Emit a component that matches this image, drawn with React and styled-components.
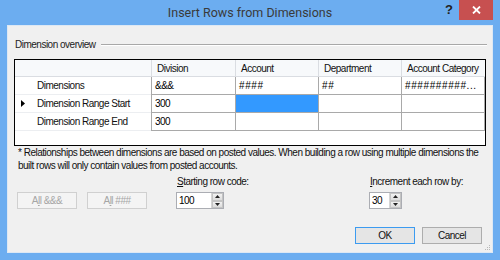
import styled, { createGlobalStyle } from "styled-components"

const Global = createGlobalStyle`
  html, body { margin: 0; padding: 0; background: #6cadf0; }
  body { font-family: "Liberation Sans", Arial, sans-serif; }
`

const Window = styled.div`
  width: 500px;
  height: 260px;
  background: #6cadf0;
  display: flex;
  flex-direction: column;
  overflow: hidden;
`

const TitleBar = styled.div`
  height: 25px;
  position: relative;
  display: flex;
  justify-content: center;
  align-items: center;
  font-family: Roboto, "Liberation Sans", sans-serif;
  font-size: 12.5px;
  color: #3a3a3a;
  padding-bottom: 1px;
  box-sizing: border-box;
`

const Help = styled.span`
  position: absolute;
  left: 445px;
  top: 2px;
  font-family: "Liberation Sans", sans-serif;
  font-weight: 700;
  font-size: 13px;
  color: #222;
`

const Close = styled.div`
  position: absolute;
  left: 459px;
  top: 0;
  width: 34px;
  height: 20px;
  background: #c75050;
  color: #fff;
  display: flex;
  align-items: center;
  justify-content: center;
  svg { display: block; }
`

const Client = styled.div`
  margin: 0 7px;
  height: 228px;
  background: #f0f0f0;
  border: 1px solid #dde8f4;
  box-sizing: border-box;
  padding: 13px 6px 0 6px;
  display: flex;
  flex-direction: column;
  font-size: 10px;
  letter-spacing: -0.5px;
  color: #000;
  position: relative;
`

const GroupHead = styled.div`
  display: flex;
  align-items: center;
  gap: 6px;
  height: 12px;
  line-height: 12px;
  padding-left: 1px;
  color: #222;
`

const GroupLine = styled.div`
  flex: 1;
  height: 1px;
  background: #a8a8a8;
  border-bottom: 1px solid #fff;
  margin-right: -1px;
`

const Grid = styled.div`
  margin-top: 8px;
  width: 472px;
  height: 87px;
  box-sizing: border-box;
  border: 1px solid #000;
  background: #fff;
  display: grid;
  grid-template-columns: 136px 84px 83px 83px 84px;
  grid-template-rows: 17px 18px 18px 18px;
  align-content: start;
`

const HeadCell = styled.div`
  background: #f7f9fb;
  border-bottom: 1px solid #dadde2;
  border-left: ${p => (p.$first ? "none" : "1px solid #dadde2")};
  padding-left: ${p => (p.$first ? 0 : 5)}px;
  display: flex;
  align-items: center;
  white-space: nowrap;
  overflow: hidden;
  color: #111;
`

const RowHead = styled.div`
  border-bottom: 1px solid #eceef1;
  display: flex;
  align-items: center;
  padding-left: 6px;
  white-space: nowrap;
  color: #111;
`

const Marker = styled.span`
  width: 16px;
  display: flex;
  align-items: center;
  svg { display: block; }
`

const Cell = styled.div`
  border-left: 1px solid #a9a9a9;
  border-bottom: 1px solid #a9a9a9;
  border-right: ${p => (p.$last ? "1px solid #a9a9a9" : "none")};
  background: ${p => (p.$selected ? "#3399ff" : "#fff")};
  padding-left: 3px;
  display: flex;
  align-items: center;
  white-space: nowrap;
  overflow: hidden;
  letter-spacing: ${p => (p.$wide ? "0.6px" : "inherit")};
`

const Note = styled.div`
  padding-left: 4px;
  line-height: 13px;
  color: #111;
  white-space: nowrap;
`

const Controls = styled.div`
  margin-top: 4px;
  display: flex;
  align-items: flex-end;
  padding-left: 3px;
`

const Buttons = styled.div`
  display: flex;
  gap: 10px;
  width: 159px;
`

const Button = styled.div`
  width: 60px;
  height: 17px;
  box-sizing: border-box;
  border: 1px solid ${p => (p.$default ? "#3c9bf0" : p.$disabled ? "#d0d0d0" : "#adadad")};
  background: ${p => (p.$disabled ? "#f4f4f4" : "#e5e5e5")};
  color: ${p => (p.$disabled ? "#a6a6a6" : "#111")};
  display: flex;
  align-items: center;
  justify-content: center;
  u { text-decoration-thickness: 1px; text-underline-offset: 1px; }
`

const Field = styled.div`
  display: flex;
  flex-direction: column;
  gap: 4px;
  width: ${p => p.$w}px;
`

const Label = styled.div`
  line-height: 12px;
  color: #111;
  padding-left: 1px;
  u { text-underline-offset: 1px; }
`

const Spinner = styled.div`
  width: ${p => p.$w}px;
  height: 17px;
  box-sizing: border-box;
  border: 1px solid #abadb3;
  background: #fff;
  display: flex;
`

const SpinText = styled.div`
  flex: 1;
  padding-left: 2px;
  display: flex;
  align-items: center;
`

const SpinArrows = styled.div`
  width: 11px;
  display: flex;
  flex-direction: column;
  border-left: 1px solid #d5d5d5;
`

const Arrow = styled.div`
  flex: 1;
  background: linear-gradient(#f2f2f2, #dcdcdc);
  border: 1px solid #c4c4c4;
  display: flex;
  align-items: center;
  justify-content: center;
  svg { display: block; }
`

const Footer = styled.div`
  margin-top: auto;
  margin-bottom: 8px;
  display: flex;
  justify-content: flex-end;
  gap: 7px;
  padding-right: 4px;
`

const Grip = styled.div`
  position: absolute;
  right: 1px;
  bottom: 1px;
  svg { display: block; }
`

const Tri = ({ up }) => (
  <svg width="5" height="3" viewBox="0 0 5 3">
    <polygon points={up ? "0,3 5,3 2.5,0" : "0,0 5,0 2.5,3"} fill="#222" />
  </svg>
)

const Spin = ({ value, w }) => (
  <Spinner $w={w}>
    <SpinText>{value}</SpinText>
    <SpinArrows>
      <Arrow><Tri up /></Arrow>
      <Arrow><Tri /></Arrow>
    </SpinArrows>
  </Spinner>
)

const columns = ["Division", "Account", "Department", "Account Category"]

const rows = [
  { name: "Dimensions", values: ["&&&", "####", "##", "##########..."] },
  { name: "Dimension Range Start", values: ["300", "", "", ""], current: true, selected: 1 },
  { name: "Dimension Range End", values: ["300", "", "", ""] },
]

export default function App() {
  return (
    <>
      <Global />
      <Window>
        <TitleBar>
          Insert Rows from Dimensions
          <Help>?</Help>
          <Close>
            <svg width="9" height="8" viewBox="0 0 9 8">
              <path d="M1 0.5 L8 7.5 M8 0.5 L1 7.5" stroke="#fff" strokeWidth="1.8" />
            </svg>
          </Close>
        </TitleBar>
        <Client>
          <GroupHead>
            Dimension overview
            <GroupLine />
          </GroupHead>
          <Grid>
            <HeadCell $first />
            {columns.map(c => <HeadCell key={c}>{c}</HeadCell>)}
            {rows.map(r => [
              <RowHead key={r.name}>
                <Marker>
                  {r.current && (
                    <svg width="4" height="7" viewBox="0 0 4 7">
                      <polygon points="0,0 4,3.5 0,7" fill="#000" />
                    </svg>
                  )}
                </Marker>
                {r.name}
              </RowHead>,
              ...r.values.map((v, i) => (
                <Cell
                  key={r.name + i}
                  $last={i === 3}
                  $selected={r.selected === i}
                  $wide={v.startsWith("#")}
                >
                  {v}
                </Cell>
              )),
            ])}
          </Grid>
          <Note>
            * Relationships between dimensions are based on posted values. When building a row using multiple dimensions the
            <br />
            built rows will only contain values from posted accounts.
          </Note>
          <Controls>
            <Buttons>
              <Button $disabled>A<u>l</u>l &amp;&amp;&amp;</Button>
              <Button $disabled>A<u>l</u>l ###</Button>
            </Buttons>
            <Field $w={193}>
              <Label><u>S</u>tarting row code:</Label>
              <Spin value="100" w={48} />
            </Field>
            <Field $w={100}>
              <Label><u>I</u>ncrement each row by:</Label>
              <Spin value="30" w={33} />
            </Field>
          </Controls>
          <Footer>
            <Button $default>OK</Button>
            <Button>Cancel</Button>
          </Footer>
          <Grip>
            <svg width="6" height="6" viewBox="0 0 6 6" fill="#b8b8b8">
              <rect x="4" y="0" width="1" height="1" />
              <rect x="2" y="2" width="1" height="1" />
              <rect x="4" y="2" width="1" height="1" />
              <rect x="0" y="4" width="1" height="1" />
              <rect x="2" y="4" width="1" height="1" />
              <rect x="4" y="4" width="1" height="1" />
            </svg>
          </Grip>
        </Client>
      </Window>
    </>
  )
}
